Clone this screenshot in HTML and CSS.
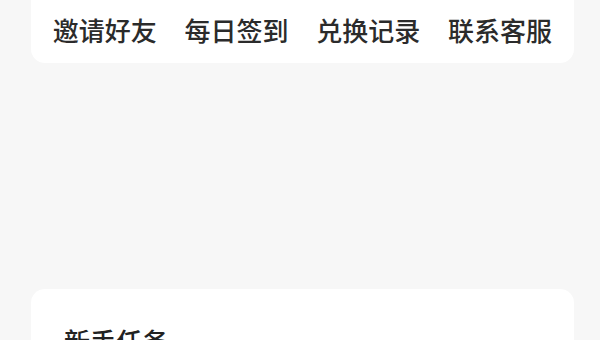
FILE: index.html
```html
<!DOCTYPE html>
<html lang="zh-CN">

<head>
    <meta charset="UTF-8">
    <meta name="viewport" content="width=device-width, initial-scale=1.0">
    <title>我的</title>
    <link rel="stylesheet" href="styles.css">
</head>

<body>

    <div class="page">
        <div class="card menu">
            <a class="menu-item" href="#">邀请好友</a>
            <a class="menu-item" href="#">每日签到</a>
            <a class="menu-item" href="#">兑换记录</a>
            <a class="menu-item" href="#">联系客服</a>
        </div>

        <div class="card tasks">
            <h2 class="tasks-title">新手任务</h2>
        </div>
    </div>

</body>

</html>
```

FILE: styles.css
```css
body {
    margin: 0;
    background: #f7f7f7;
    font-family: "Noto Sans CJK SC", "Noto Sans", sans-serif;
    color: #2b2b2b;
    overflow: hidden;
}

.page {
    padding: 0 26px 0 31px;
}

.card {
    background: #ffffff;
    border-radius: 14px;
}

.menu {
    display: grid;
    grid-template-columns: repeat(4, 1fr);
    margin-top: -16px;
    padding: 29px 8px 16px;
}

.menu-item {
    text-align: center;
    font-size: 26px;
    font-weight: 500;
    line-height: 34px;
    color: #2b2b2b;
    text-decoration: none;
}

.tasks {
    margin-top: 226px;
    padding: 34px 33px;
    height: 200px;
}

.tasks-title {
    margin: 0;
    font-size: 26px;
    font-weight: 500;
    line-height: 36px;
    color: #222;
}
```
